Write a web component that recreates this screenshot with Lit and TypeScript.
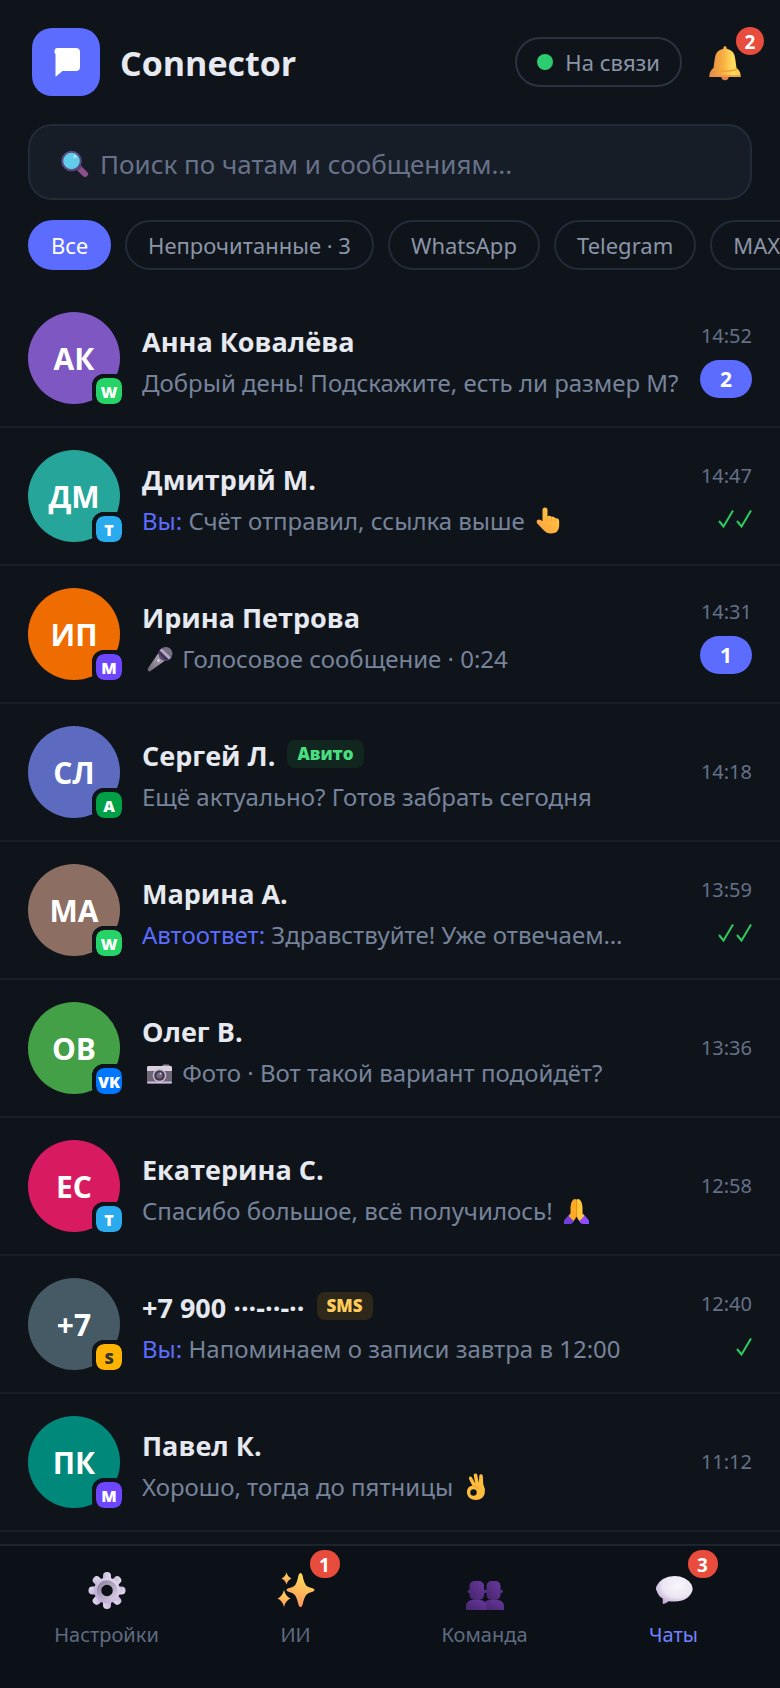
import { LitElement, html, css, svg, nothing, TemplateResult } from "lit";
import { customElement, property, state } from "lit/decorators.js";
import { classMap } from "lit/directives/class-map.js";

type Glyph = "mic" | "camera" | "point" | "pray" | "ok";

interface Chat {
  initials: string;
  color: string;
  channel: string;
  name: string;
  tag?: "avito" | "sms";
  prefix?: string;
  before?: Glyph;
  text: string;
  after?: Glyph;
  time: string;
  unread?: number;
  ticks?: number;
}

const TAGS = { avito: "Авито", sms: "SMS" };

const CHATS: Chat[] = [
  { initials: "АК", color: "#7e57c2", channel: "W", name: "Анна Ковалёва", text: "Добрый день! Подскажите, есть ли размер М?", time: "14:52", unread: 2 },
  { initials: "ДМ", color: "#26a69a", channel: "T", name: "Дмитрий М.", prefix: "Вы:", text: "Счёт отправил, ссылка выше", after: "point", time: "14:47", ticks: 2 },
  { initials: "ИП", color: "#ef6c00", channel: "M", name: "Ирина Петрова", before: "mic", text: "Голосовое сообщение · 0:24", time: "14:31", unread: 1 },
  { initials: "СЛ", color: "#5c6bc0", channel: "A", name: "Сергей Л.", tag: "avito", text: "Ещё актуально? Готов забрать сегодня", time: "14:18" },
  { initials: "МА", color: "#8d6e63", channel: "W", name: "Марина А.", prefix: "Автоответ:", text: "Здравствуйте! Уже отвечаем…", time: "13:59", ticks: 2 },
  { initials: "ОВ", color: "#43a047", channel: "VK", name: "Олег В.", before: "camera", text: "Фото · Вот такой вариант подойдёт?", time: "13:36" },
  { initials: "ЕС", color: "#d81b60", channel: "T", name: "Екатерина С.", text: "Спасибо большое, всё получилось!", after: "pray", time: "12:58" },
  { initials: "+7", color: "#455a64", channel: "S", name: "+7 900 ···-··-··", tag: "sms", prefix: "Вы:", text: "Напоминаем о записи завтра в 12:00", time: "12:40", ticks: 1 },
  { initials: "ПК", color: "#00897b", channel: "M", name: "Павел К.", text: "Хорошо, тогда до пятницы", after: "ok", time: "11:12" },
];

const FILTERS = ["Все", "Непрочитанные · 3", "WhatsApp", "Telegram", "MAX"];

/* 32-unit glyphs that sit inside the preview line */
const GLYPHS: Record<Glyph, TemplateResult> = {
  mic: svg`
    <defs>
      <linearGradient id="mic-body" x1="0" y1="1" x2="1" y2="0">
        <stop offset="0" stop-color="#6c6674"/><stop offset="1" stop-color="#bdb7c4"/>
      </linearGradient>
    </defs>
    <path d="M5 27.500 Q4.300 26.500 5.200 25 L15.200 10.200 L22.500 17.200 L7.500 28 Q5.800 29 5 27.500Z" fill="url(#mic-body)"/>
    <circle cx="22.500" cy="11" r="7" fill="#5a5067"/>
    <path d="M22 4 A7 7 0 0 1 29.500 11 L26 15 L18 7Z" fill="#776d84"/>
    <path d="M14.800 9.500 L17.200 6.200 L27 16 L23.500 18.200Z" fill="#45315e"/>
    <path d="M16.600 7.400 L18.600 5.400 L28 14.600 L26 16.400Z" fill="#b3abbf"/>
    <circle cx="15.500" cy="17.500" r="1.200" fill="#e3deea"/>`,
  camera: svg`
    <rect x="19.500" y="7.500" width="7" height="3" rx="1" fill="#8c8497"/>
    <rect x="4" y="9" width="25" height="17.500" rx="1.500" fill="#6d6679"/>
    <path d="M5.500 9 H27.500 Q29 9 29 10.500 V14 H4 V10.500 Q4 9 5.500 9Z" fill="#d8d0df"/>
    <rect x="4" y="24.500" width="25" height="2" rx="1" fill="#cbb9dc"/>
    <circle cx="16.500" cy="18.500" r="6.800" fill="#c6bfcd"/>
    <circle cx="16.500" cy="18.500" r="5.300" fill="#43394f"/>
    <circle cx="16.500" cy="18.500" r="3" fill="#75657f"/>
    <circle cx="17.500" cy="16.500" r="1" fill="#d7cfe0"/>`,
  point: svg`
    <defs>
      <linearGradient id="hand" x1="0" y1="1" x2="1" y2="0">
        <stop offset="0" stop-color="#ff9d3c"/><stop offset="1" stop-color="#ffce45"/>
      </linearGradient>
    </defs>
    <path d="M13 2.500 Q15.500 2.500 15.500 5 V11.500 Q16.300 10.500 17.500 10.700 Q19 10.900 19.500 12 Q21 11.300 22 11.900 Q23.200 12.400 23.500 13.500 Q25.200 12.900 26.200 13.700 Q27.300 14.600 27.200 17 V21 Q26.800 28.500 19 28.500 Q14.500 28.500 11.500 25 L5.300 18.500 Q3.800 16.500 5.500 15 Q7 14 9 15.300 L10.500 16.200 V5 Q10.500 2.500 13 2.500Z" fill="url(#hand)"/>
    <path d="M15.500 11.500 V15.500 M19.500 12 V15.500 M23.500 13.500 V16.500" stroke="#f2a238" stroke-width="1" fill="none" stroke-linecap="round"/>`,
  pray: svg`
    <path d="M4 29 V25.500 L10 18.500 L14.500 25 Q13.500 28 10.500 29Z" fill="#6f41d8"/>
    <path d="M29 29 V25.500 L23 18.500 L18.500 25 Q19.500 28 22.500 29Z" fill="#8f4bff"/>
    <path d="M16.500 4.500 Q14 3 12.500 5.500 Q10.500 8 10.500 12 V18.500 L8.800 21 L13.500 26 Q15.500 24 16.500 21Z" fill="#ffaa24"/>
    <path d="M16.500 4.500 Q19 3 20.500 5.500 Q22.500 8 22.500 12 V18.500 L24.200 21 L19.500 26 Q17.500 24 16.500 21Z" fill="#ffc736"/>
    <path d="M16.500 5 V22" stroke="#ee8b25" stroke-width="1"/>`,
  ok: svg`
    <path d="M12.500 15 L9 8 Q8.500 6 10 5.500 Q11.300 5.200 12 6.500 L15.200 12.500 L13.700 4.500 Q13.700 2.800 15.300 2.600 Q16.900 2.500 17.300 4 L18.800 12 L19.300 4.500 Q19.800 3 21.200 3.200 Q22.800 3.400 22.800 5 L23.300 13.500 Q25.800 18 24.700 22.500 Q23 29 16 29 Q8 28.800 7 22.300 Q6.500 17 10.500 15Z" fill="#ffbd3d"/>
    <path d="M13.500 15 Q17.500 15.500 18.500 18" stroke="#ef9430" stroke-width="1" fill="none"/>
    <circle cx="13.500" cy="21.500" r="3.200" fill="#0f141a"/>`,
};

const PAGE_FONT = css`
  :host {
    --bg: #0f141a;
    --accent: #5b6cff;
    --line: #222b38;
    --font: "Noto Sans", "Open Sans", sans-serif;
    --font-bold: "Open Sans", "Noto Sans", sans-serif;
  }
  * {
    box-sizing: border-box;
  }
`;

@customElement("chat-row")
export class ChatRow extends LitElement {
  @property({ attribute: false }) chat!: Chat;

  static styles = [
    PAGE_FONT,
    css`
      :host {
        display: block;
      }
      .row {
        display: flex;
        align-items: center;
        gap: 22px;
        padding: 22px 28px;
        border-bottom: 2px solid #181e28;
        color: inherit;
        text-decoration: none;
      }
      .avatar {
        position: relative;
        flex: none;
        display: grid;
        place-items: center;
        width: 92px;
        height: 92px;
        padding-top: 2px;
        border-radius: 50%;
        color: #fff;
        font: 700 30px/40px var(--font-bold);
      }
      .channel {
        position: absolute;
        right: -6px;
        bottom: -4px;
        display: grid;
        place-items: center;
        width: 34px;
        height: 34px;
        border: 4px solid var(--bg);
        border-radius: 12px;
        background-clip: padding-box;
        color: #fff;
        font: 800 16px/28px var(--font-bold);
      }
      .ring {
        position: absolute;
        right: -6px;
        bottom: -4px;
        width: 34px;
        height: 34px;
        border-radius: 12px;
        background: var(--bg);
      }
      .W { background-color: #25d366; }
      .T { background-color: #2aabee; }
      .M { background-color: #6c47ff; }
      .A { background-color: #00a046; }
      .VK { background-color: #0077ff; }
      .S { background-color: #ffb300; color: #333; }
      .body {
        flex: 1;
        min-width: 0;
        display: flex;
        flex-direction: column;
      }
      .title {
        display: flex;
        align-items: center;
        gap: 12px;
      }
      .name {
        color: #e6e9ef;
        font: 700 27px/50px var(--font-bold);
        white-space: nowrap;
      }
      .tag {
        margin-bottom: 4px;
        padding: 0 10px;
        border-radius: 8px;
        font: 800 17px/28px var(--font-bold);
      }
      .avito { background: #10261f; color: #4ade80; }
      .sms { background: #2e281a; color: #ffcc5c; }
      .preview {
        height: 32px;
        color: #76839a;
        font: 24px/32px var(--font);
        white-space: nowrap;
        overflow: hidden;
        text-overflow: ellipsis;
      }
      .prefix {
        color: var(--accent);
      }
      .glyph {
        width: 34px;
        height: 32px;
        vertical-align: top;
      }
      .meta {
        flex: none;
        display: flex;
        flex-direction: column;
        align-items: flex-end;
        gap: 6px;
        margin-left: -10px;
      }
      .time {
        color: #647088;
        font: 20px/36px var(--font);
      }
      .unread {
        min-width: 52px;
        padding: 0 12px;
        border-radius: 19px;
        background: var(--accent);
        color: #fff;
        font: 700 21px/38px var(--font-bold);
        text-align: center;
      }
      .ticks {
        display: flex;
        align-items: center;
        gap: 2px;
        height: 34px;
        padding-top: 4px;
      }
      .tick {
        width: 16px;
        height: 20px;
        fill: none;
        stroke: #2ecc5f;
        stroke-width: 2;
      }
    `,
  ];

  private glyph(name: Glyph) {
    return html`<svg class="glyph" viewBox="0 0 32 32" aria-hidden="true">${GLYPHS[name]}</svg>`;
  }

  render() {
    const c = this.chat;
    return html`
      <a class="row" href="#chat">
        <span class="avatar" style="background:${c.color}">
          ${c.initials}
          <span class="ring"></span>
          <span class="channel ${c.channel}">${c.channel}</span>
        </span>
        <span class="body">
          <span class="title">
            <span class="name">${c.name}</span>
            ${c.tag ? html`<span class="tag ${c.tag}">${TAGS[c.tag]}</span>` : nothing}
          </span>
          <span class="preview">${c.prefix ? html`<span class="prefix">${c.prefix}</span> ` : nothing}${c.before ? html`${this.glyph(c.before)} ` : nothing}${c.text}${c.after ? html` ${this.glyph(c.after)}` : nothing}</span>
        </span>
        <span class="meta">
          <time class="time">${c.time}</time>
          ${c.unread ? html`<span class="unread">${c.unread}</span>` : nothing}
          ${c.ticks
            ? html`<span class="ticks">
                ${Array.from({ length: c.ticks }, () => html`<svg class="tick" viewBox="0 0 16 20" aria-hidden="true"><path d="M1 12 L5.500 17.500 L15 1.500"/></svg>`)}
              </span>`
            : nothing}
        </span>
      </a>
    `;
  }
}

const tooth = (angle: number) =>
  svg`<rect x="18" y="4" width="8" height="14" rx="4" transform="rotate(${angle} 22 22.500)"/>`;

/* 44-unit icons of the tab bar */
const TAB_ICONS = {
  settings: svg`
    <defs>
      <linearGradient id="gear" x1="0" y1="1" x2="1" y2="0">
        <stop offset="0" stop-color="#b7a2d3"/><stop offset="1" stop-color="#e6dfee"/>
      </linearGradient>
      <linearGradient id="gear-ring" x1="0" y1="0" x2="1" y2="1">
        <stop offset="0" stop-color="#9084a0"/><stop offset="1" stop-color="#d3c8df"/>
      </linearGradient>
    </defs>
    <g fill="url(#gear)">
      ${[0, 45, 90, 135, 180, 225, 270, 315].map(tooth)}
      <circle cx="22" cy="22.500" r="13"/>
    </g>
    <circle cx="22" cy="22.500" r="8" fill="#0c1118" stroke="url(#gear-ring)" stroke-width="4.500"/>`,
  ai: svg`
    <defs>
      <linearGradient id="spark" x1="0" y1="1" x2="0.300" y2="0">
        <stop offset="0" stop-color="#ff8a66"/><stop offset="0.500" stop-color="#ffb45a"/><stop offset="1" stop-color="#ffd95c"/>
      </linearGradient>
    </defs>
    <g fill="url(#spark)">
      <path d="M26.500 5 Q28 5 28.600 7.500 Q30 16 33 18.200 Q34.500 19.200 38.500 20.300 Q40.500 21 40.500 22 Q40.500 23.200 38.500 23.700 Q34 25 32.600 26.500 Q30.200 29 28.600 36.500 Q28 39 26.500 39 Q25 39 24.400 36.500 Q22.800 29 20.400 26.500 Q19 25 14.500 23.700 Q12.500 23.200 12.500 22 Q12.500 21 14.500 20.300 Q18.500 19.200 20 18.200 Q23 16 24.400 7.500 Q25 5 26.500 5Z"/>
      <path d="M12.500 4.500 Q13.800 9 17.500 10.500 Q13.800 12 12.500 16.500 Q11.200 12 7.500 10.500 Q11.200 9 12.500 4.500Z"/>
      <path d="M10 22 Q11.500 28.500 16.500 30.500 Q11.500 32.500 10 39 Q8.500 32.500 3.500 30.500 Q8.500 28.500 10 22Z"/>
    </g>`,
  team: svg`
    <defs>
      <linearGradient id="people" x1="0" y1="1" x2="1" y2="0">
        <stop offset="0" stop-color="#46246a"/><stop offset="1" stop-color="#68399f"/>
      </linearGradient>
    </defs>
    <g fill="url(#people)">
      <rect x="23.500" y="13" width="14" height="19" rx="5"/>
      <circle cx="38" cy="23.500" r="1.800"/>
      <path d="M21 42 V37 Q21.500 32 27 32 H34.500 Q41 32.500 41 38.500 V42Z"/>
      <circle cx="6.500" cy="23.500" r="1.800"/>
      <circle cx="22" cy="23.500" r="1.800"/>
      <rect x="6.500" y="13" width="14.500" height="19" rx="5"/>
      <path d="M3 42 V38.500 Q3 32.500 9.500 32 H17 Q23.500 32.500 23.500 38.500 V42Z"/>
    </g>`,
  chats: svg`
    <defs>
      <radialGradient id="bubble" cx="0.600" cy="0.350" r="0.700">
        <stop offset="0" stop-color="#faf7fc"/><stop offset="0.600" stop-color="#ece5f2"/><stop offset="1" stop-color="#b9a6d2"/>
      </radialGradient>
    </defs>
    <path d="M22.500 8 Q34 8 39.500 16.500 Q41.200 20.500 40.500 22.500 Q36.500 33.500 22.500 33.500 Q18.500 33.500 16.500 33.200 Q14.500 35.500 11.500 36 Q10.500 36 10.700 35 V30.500 Q6.500 28.500 4.500 22.500 Q3.500 20.500 4.300 18.500 Q9 8.500 22.500 8Z" fill="url(#bubble)"/>`,
};

const TABS: { icon: keyof typeof TAB_ICONS; label: string; count?: number }[] = [
  { icon: "settings", label: "Настройки" },
  { icon: "ai", label: "ИИ", count: 1 },
  { icon: "team", label: "Команда" },
  { icon: "chats", label: "Чаты", count: 3 },
];

@customElement("app-root")
export class AppRoot extends LitElement {
  @state() private filter = "Все";
  @state() private tab = "chats";

  static styles = [
    PAGE_FONT,
    css`
      :host {
        display: flex;
        flex-direction: column;
        min-height: 100vh;
        background: var(--bg);
        font-family: var(--font);
        overflow: hidden;
      }
      .top {
        display: flex;
        align-items: center;
        gap: 20px;
        padding: 28px 32px;
      }
      .logo {
        flex: none;
        width: 68px;
        height: 68px;
        border-radius: 20px;
        background: var(--accent);
      }
      .brand {
        flex: 1;
        margin: 0;
        padding-top: 2px;
        color: #e6e9ef;
        font: 700 34px/44px var(--font-bold);
      }
      .status {
        display: flex;
        align-items: center;
        gap: 12px;
        height: 50px;
        padding: 0 20px;
        border: 2px solid #2a3342;
        border-radius: 25px;
        color: #8b95a8;
        font-size: 22px;
        line-height: 30px;
      }
      .dot {
        width: 16px;
        height: 16px;
        border-radius: 50%;
        background: #2ecc71;
      }
      .bell {
        position: relative;
        width: 46px;
        height: 50px;
        padding: 0;
        border: 0;
        background: none;
      }
      .bell-icon {
        display: block;
        width: 46px;
        height: 50px;
      }
      .badge {
        position: absolute;
        border-radius: 15px;
        background: #e74c3c;
        color: #fff;
        height: 28px;
        font: 700 19px/30px var(--font-bold);
        text-align: center;
      }
      .bell .badge {
        top: -10px;
        right: -16px;
        width: 28px;
      }
      .search {
        display: flex;
        align-items: center;
        gap: 10px;
        height: 76px;
        margin: 0 28px;
        padding: 0 28px;
        border: 2px solid var(--line);
        border-radius: 24px;
        background: #171d26;
      }
      .lens {
        flex: none;
        width: 32px;
        height: 32px;
      }
      .field {
        flex: 1;
        min-width: 0;
        height: 60px;
        padding: 4px 0 0;
        border: 0;
        outline: 0;
        background: none;
        color: #e6e9ef;
        font: 26px/36px var(--font);
      }
      .field::placeholder {
        color: #67728a;
        opacity: 1;
      }
      .filters {
        display: flex;
        gap: 14px;
        padding: 20px 28px;
        overflow: hidden;
      }
      .chip {
        flex: none;
        height: 50px;
        padding: 0 21px;
        border: 2px solid var(--line);
        border-radius: 25px;
        background: none;
        color: #8b95a8;
        font: 22px/30px var(--font);
      }
      .chip.active {
        border-color: var(--accent);
        background: var(--accent);
        color: #fff;
      }
      .list {
        flex: 1;
        margin: 0;
        padding: 0;
        list-style: none;
      }
      .tabs {
        display: grid;
        grid-template-columns: repeat(4, 1fr);
        padding: 22px 12px 36px;
        border-top: 2px solid #1c2430;
        background: #0c1118;
      }
      .tab {
        display: flex;
        flex-direction: column;
        align-items: center;
        gap: 6px;
        color: #5f6b80;
        font-size: 20px;
        line-height: 34px;
        text-decoration: none;
      }
      .tab.active {
        color: #7282ff;
      }
      .icon {
        position: relative;
        width: 44px;
        height: 44px;
      }
      .icon svg {
        display: block;
      }
      .icon .badge {
        top: -18px;
        left: 36px;
        width: 30px;
      }
    `,
  ];

  render() {
    return html`
      <header class="top">
        <svg class="logo" viewBox="0 0 68 68" aria-hidden="true">
          <path d="M25.500 20 H44 Q48 20 48 24 V39 Q48 43 44 43 H30.500 L24 48.500 Q23.500 48.500 23.500 48 V26 L22.500 25 Q22 20 25.500 20Z" fill="#fff" />
        </svg>
        <h1 class="brand">Connector</h1>
        <div class="status"><span class="dot"></span>На связи</div>
        <button class="bell" type="button" aria-label="Уведомления">
          <svg class="bell-icon" viewBox="0 0 46 50" aria-hidden="true">
            <defs>
              <linearGradient id="bell-fill" x1="0" x2="1">
                <stop offset="0" stop-color="#e08a4a" />
                <stop offset="0.450" stop-color="#f9b041" />
                <stop offset="0.750" stop-color="#ffdf5e" />
                <stop offset="1" stop-color="#ffc94a" />
              </linearGradient>
            </defs>
            <circle cx="23" cy="39.500" r="3.700" fill="#e07f55" />
            <path d="M23 9 Q24.500 9 24.700 11.700 Q32.500 13 33.300 22 L34.500 31 Q38 33.500 38.500 37.500 V40 H7.500 V37.500 Q8 33.500 11.500 31 L12.700 22 Q13.500 13 21.300 11.700 Q21.500 9 23 9Z" fill="url(#bell-fill)" />
            <path d="M11 32.500 Q23 36 35 32.500" stroke="#f0a13a" stroke-width="1.500" fill="none" />
            <path d="M7.500 39 H38.500" stroke="#e8944a" stroke-width="1.500" />
          </svg>
          <span class="badge">2</span>
        </button>
      </header>

      <label class="search">
        <svg class="lens" viewBox="0 0 32 32" aria-hidden="true">
          <path d="M20.500 21.500 L27 28" stroke="#8b4f8c" stroke-width="6" stroke-linecap="round" />
          <path d="M19 20 L22 23" stroke="#5d3f78" stroke-width="4" />
          <circle cx="13.500" cy="15" r="9.300" fill="#62cdea" stroke="#5a4a80" stroke-width="2" />
          <circle cx="17" cy="10.500" r="1.600" fill="#b6e6f7" />
        </svg>
        <input class="field" type="text" aria-label="Поиск" placeholder="Поиск по чатам и сообщениям..." />
      </label>

      <div class="filters">
        ${FILTERS.map(
          (f) => html`<button type="button" class=${classMap({ chip: true, active: f === this.filter })} @click=${() => (this.filter = f)}>${f}</button>`
        )}
      </div>

      <ul class="list">
        ${CHATS.map((chat) => html`<li><chat-row .chat=${chat}></chat-row></li>`)}
      </ul>

      <nav class="tabs">
        ${TABS.map(
          (t) => html`
            <a href="#${t.icon}" class=${classMap({ tab: true, active: t.icon === this.tab })} @click=${() => (this.tab = t.icon)}>
              <span class="icon">
                <svg viewBox="0 0 44 44" width="44" height="44" aria-hidden="true">${TAB_ICONS[t.icon]}</svg>
                ${t.count ? html`<span class="badge">${t.count}</span>` : nothing}
              </span>
              ${t.label}
            </a>
          `
        )}
      </nav>
    `;
  }
}
